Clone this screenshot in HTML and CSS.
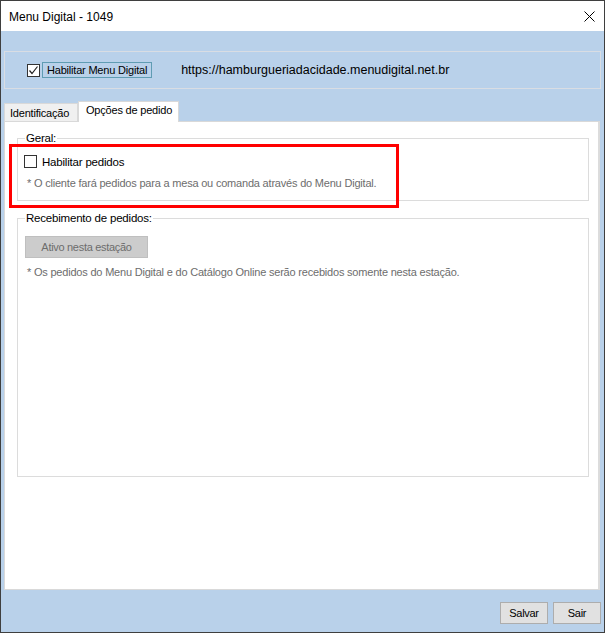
FILE: index.html
```html
<!DOCTYPE html>
<html lang="pt-BR">
<head>
<meta charset="utf-8">
<title>Menu Digital - 1049</title>
<link rel="stylesheet" href="styles.css">
</head>
<body>
<div class="window">
  <div class="titlebar">
    <span class="title">Menu Digital - 1049</span>
    <svg class="close" width="11" height="11" viewBox="0 0 11 11"><path d="M0.5 0.5L10.5 10.5M10.5 0.5L0.5 10.5" stroke="#000" stroke-width="1" fill="none"/></svg>
  </div>
  <div class="client">
    <div class="topbox">
      <span class="check checked">
        <svg width="11" height="11" viewBox="0 0 11 11"><path d="M1.5 5.5L4 8.5L9.5 1.5" stroke="#222" stroke-width="1.2" fill="none"/></svg>
      </span>
      <span class="focuslabel">Habilitar Menu Digital</span>
      <span class="url">https://hamburgueriadacidade.menudigital.net.br</span>
    </div>
    <div class="tabs">
      <div class="tab">Identificação</div>
      <div class="tab active">Opções de pedido</div>
    </div>
    <div class="panel">
      <fieldset class="group geral">
        <legend>Geral:</legend>
        <div class="row">
          <span class="check"></span>
          <span class="label">Habilitar pedidos</span>
        </div>
        <div class="note">* O cliente fará pedidos para a mesa ou comanda através do Menu Digital.</div>
      </fieldset>
      <fieldset class="group receb">
        <legend>Recebimento de pedidos:</legend>
        <div class="btn disabled">Ativo nesta estação</div>
        <div class="note note2">* Os pedidos do Menu Digital e do Catálogo Online serão recebidos somente nesta estação.</div>
      </fieldset>
      <div class="highlight"></div>
    </div>
    <div class="footer">
      <div class="btn">Salvar</div>
      <div class="btn">Sair</div>
    </div>
  </div>
</div>
</body>
</html>
```
FILE: styles.css
```css
* { box-sizing: border-box; }
html, body { margin: 0; padding: 0; background: #fff; }
body {
  font-family: "Liberation Sans", Arial, sans-serif;
  font-size: 11px;
  letter-spacing: -0.2px;
  color: #000;
}
.window {
  width: 605px;
  height: 633px;
  border: 1px solid #3f3f3f;
  display: flex;
  flex-direction: column;
  background: #fff;
}
.titlebar {
  height: 30px;
  flex: none;
  display: flex;
  align-items: center;
  justify-content: space-between;
  padding: 0 9px 0 8px;
  background: #fff;
}
.title { font-size: 12px; letter-spacing: 0; color: #000; margin-top: 1px; }
.close { margin-top: 1px; }
.client {
  flex: 1;
  background: #b9d1ea;
  display: flex;
  flex-direction: column;
  padding: 20px 3px 0 3px;
}
.topbox {
  height: 38px;
  width: 597px;
  border: 1px solid #d9dde3;
  display: flex;
  align-items: center;
  padding-left: 22px;
  flex: none;
}
.check {
  width: 13px;
  height: 13px;
  border: 1px solid #333;
  background: #fff;
  display: inline-flex;
  align-items: center;
  justify-content: center;
  flex: none;
}
.focuslabel {
  margin-left: 2px;
  border: 1px solid #5f9cb3;
  padding: 0 4px 0 4px;
  height: 16px;
  line-height: 14px;
  white-space: nowrap;
}
.url {
  margin-left: 29px;
  font-size: 12.5px;
  letter-spacing: 0;
  white-space: nowrap;
}
.tabs {
  margin-top: 11px;
  height: 21px;
  display: flex;
  align-items: flex-end;
  flex: none;
}
.tab {
  height: 18px;
  border: 1px solid #d9d9d9;
  border-bottom: none;
  background: #f0f0f0;
  padding: 0 4px 0 5px;
  line-height: 18px;
  white-space: nowrap;
  width: 74px;
}
.tab.active {
  height: 21px;
  background: #fff;
  border-color: #d9d9d9;
  line-height: 17px;
  padding: 0 0 0 7px;
  width: 101px;
  margin-bottom: -1px;
  position: relative;
  z-index: 1;
}
.panel {
  position: relative;
  width: 596px;
  height: 469px;
  flex: none;
  background: #fff;
  border: 1px solid #d9d9d9;
  border-right: 2px solid #dcdcdc;
  padding: 9px 9px 0 12px;
}
.group {
  margin: 0;
  border: 1px solid #dcdcdc;
  padding: 0 0 0 6px;
  min-width: 0;
}
.group legend {
  padding: 0 1px;
  margin-left: 1px;
  line-height: 14px;
  font-size: 11.5px;
  color: #000;
}
.geral { height: 70px; }
.row {
  display: flex;
  align-items: center;
  margin-top: 10px;
}
.row .label { margin-left: 5px; font-size: 11.5px; }
.note {
  color: #6d6d6d;
  margin-top: 9px;
  padding-left: 3px;
  white-space: nowrap;
}
.receb {
  margin-top: 10px;
  height: 266px;
}
.btn {
  width: 48px;
  height: 22px;
  border: 1px solid #adadad;
  background: #e1e1e1;
  font-size: 11px;
  letter-spacing: -0.3px;
  display: flex;
  align-items: center;
  justify-content: center;
  color: #000;
}
.btn.disabled {
  width: 123px;
  margin-top: 11px;
  margin-left: 1px;
  background: #cccccc;
  border-color: #bfbfbf;
  color: #6d6d6d;
}
.note2 { margin-top: 8px; }
.highlight {
  position: absolute;
  left: 4px;
  top: 22px;
  width: 390px;
  height: 64px;
  border: 3px solid #ff0000;
}
.footer {
  display: flex;
  justify-content: flex-end;
  gap: 5px;
  margin-top: 12px;
  flex: none;
}
```
